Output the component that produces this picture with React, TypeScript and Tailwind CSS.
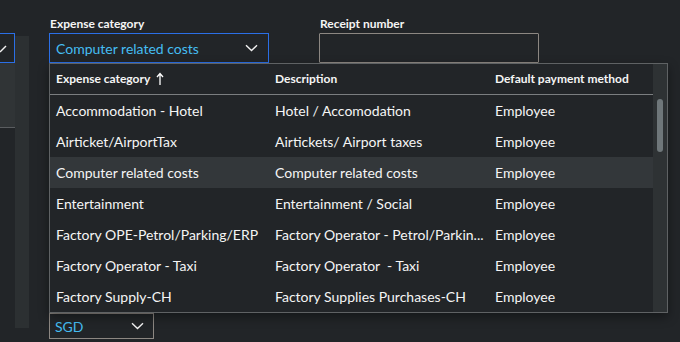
const rows = [
  { category: 'Accommodation - Hotel', description: 'Hotel / Accomodation', method: 'Employee' },
  { category: 'Airticket/AirportTax', description: 'Airtickets/ Airport taxes', method: 'Employee' },
  { category: 'Computer related costs', description: 'Computer related costs', method: 'Employee', selected: true },
  { category: 'Entertainment', description: 'Entertainment / Social', method: 'Employee' },
  // the grid cuts this one off, keep the shortened text as shown
  { category: 'Factory OPE-Petrol/Parking/ERP', description: 'Factory Operator - Petrol/Parkin...', method: 'Employee' },
  { category: 'Factory Operator - Taxi', description: 'Factory Operator\u00a0 - Taxi', method: 'Employee' },
  { category: 'Factory Supply-CH', description: 'Factory Supplies Purchases-CH', method: 'Employee' },
];

function Chevron() {
  return (
    <svg width="13" height="8" viewBox="0 0 13 8" fill="none" className="shrink-0">
      <path d="M1 1.2 L6.5 6.6 L12 1.2" stroke="#f2f2f2" strokeWidth="1.4" />
    </svg>
  );
}

function SortArrow() {
  return (
    <svg width="8" height="14" viewBox="0 0 8 14" fill="none" className="ml-[6px]">
      <path d="M4 13 V2 M1 5 L4 1.5 L7 5" stroke="#ffffff" strokeWidth="1.3" />
    </svg>
  );
}

export default function App() {
  return (
    <div className="relative w-[680px] h-[342px] overflow-hidden bg-[#222528] text-[#f5f5f5] font-['Lato','Liberation_Sans',sans-serif]">
      <div className="flex h-full">
        {/* cut-off field on the left */}
        <div className="w-[15px] shrink-0 pt-[33px]">
          <div className="flex h-[30px] items-center border border-l-0 border-[#2b6fe6]">
            <svg width="8" height="10" viewBox="0 0 8 10" fill="none">
              <path d="M0 9 L6 3" stroke="#f2f2f2" strokeWidth="1.4" />
            </svg>
          </div>
          <div className="h-[65px] bg-[#303436] border-b border-[#5a5d60]" />
        </div>
        <div className="w-[14px] shrink-0 mt-[36px] h-[292px] bg-[#2c3032]" />

        <div className="ml-[20px] pt-[15px]">
          <div className="flex gap-[50px]">
            <div className="w-[220px]">
              <div className="h-[18px] pl-[1px] text-[12px] font-bold leading-[18px]">Expense category</div>
              <div className="flex h-[30px] items-center justify-between border border-[#2b6fe6] pl-[6px] pr-[10px]">
                <span className="text-[14px] text-[#45bdf2]">Computer related costs</span>
                <Chevron />
              </div>
            </div>
            <div className="w-[220px]">
              <div className="h-[18px] pl-[1px] text-[12px] font-bold leading-[18px]">Receipt number</div>
              <div className="h-[30px] border border-[#8c8782] rounded-[1px]" />
            </div>
          </div>

          <div className="mt-[250px] flex h-[26px] w-[105px] items-center justify-between border border-[#8c8782] pl-[5px] pr-[9px]">
            <span className="text-[14px] text-[#45bdf2]">SGD</span>
            <Chevron />
          </div>
        </div>
      </div>

      {/* lookup popup */}
      <div className="absolute left-[49px] top-[63px] flex h-[250px] w-[619px] border border-[#5f6264] bg-[#222528] shadow-[0_4px_10px_rgba(0,0,0,0.4)]">
        <div className="flex-1">
          <div className="flex h-[31px] items-center border-b border-[#7b7e80] text-[12px] font-bold">
            <div className="flex w-[219px] items-center pl-[6px]">
              Expense category
              <SortArrow />
            </div>
            <div className="w-[220px] pl-[6px]">Description</div>
            <div className="pl-[6px]">Default payment method</div>
          </div>
          {rows.map((r) => (
            <div
              key={r.category}
              className={`flex h-[31px] items-center text-[14px] whitespace-nowrap ${r.selected ? 'bg-[#33373a]' : ''}`}
            >
              <div className="w-[219px] pl-[6px]">{r.category}</div>
              <div className="w-[220px] pl-[6px]">{r.description}</div>
              <div className="pl-[6px]">{r.method}</div>
            </div>
          ))}
        </div>
        <div className="flex w-[14px] justify-center bg-[#2e3234] pt-[35px]">
          <div className="h-[53px] w-[6px] rounded-full bg-[#6f777a]" />
        </div>
      </div>
    </div>
  );
}
